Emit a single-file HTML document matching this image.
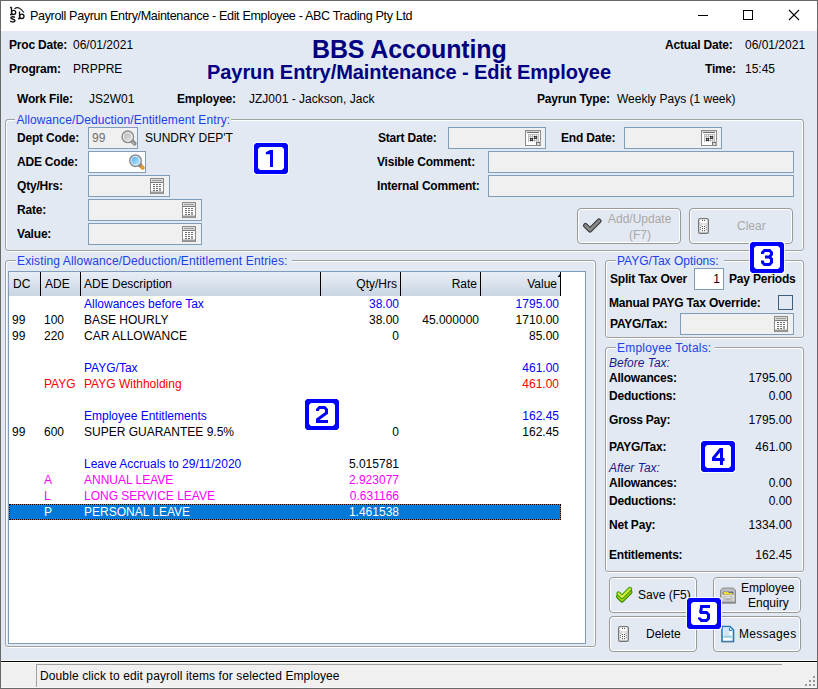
<!DOCTYPE html>
<html><head><meta charset="utf-8">
<style>
*{box-sizing:border-box;margin:0;padding:0}
html,body{width:818px;height:689px;overflow:hidden;background:#7a7a7a}
body{position:relative;font-family:"Liberation Sans",sans-serif;font-size:12px;color:#000}
.a{position:absolute}
.t{position:absolute;white-space:nowrap;font-size:12px;line-height:14px;height:14px}
.b{font-weight:bold;letter-spacing:-0.2px}
.r{text-align:right}
#win{left:0;top:0;width:818px;height:689px;background:#686868;}
#title{left:1px;top:1px;width:816px;height:30px;background:#fff}
#client{left:1px;top:31px;width:816px;height:630px;background:#E3E9F3}
.g1{position:absolute;border:1px solid #fff;border-radius:3px}
.g2{position:absolute;border:1px solid #A0A0A0;border-radius:3px}
.lbl{position:absolute;white-space:nowrap;font-size:12px;line-height:14px;color:#2040E8;background:#E3E9F3;padding:0 1px}
.inp{position:absolute;border:1px solid #7F9DB9;background:#F0F0F0}
.btn{position:absolute;border:1px solid #999;border-radius:4px;box-shadow:inset 0 0 0 1px #fff}
.badge{position:absolute;width:34px;height:31px;background:#0000FF;clip-path:polygon(2px 0,32px 0,34px 2px,34px 29px,32px 31px,2px 31px,0 29px,0 2px)}
.halo{position:absolute;width:36px;height:33px;background:#fff;opacity:0.85;clip-path:polygon(2px 0,34px 0,36px 2px,36px 31px,34px 33px,2px 33px,0 31px,0 2px)}
.badge i{position:absolute;left:4px;top:4px;width:26px;height:23px;background:#fff;clip-path:polygon(2px 0,24px 0,26px 2px,26px 21px,24px 23px,2px 23px,0 21px,0 2px)}
.badge span{position:absolute;left:0;top:4px;width:34px;text-align:center;font:bold 24px/24px "Liberation Sans",sans-serif;color:#0000FF}
.hdr{position:absolute;top:272px;height:24px;background:linear-gradient(#E9EEF5,#C9D5E4)}
.sep{position:absolute;top:272px;width:1px;height:24px;background:#000}
.grow{position:absolute;white-space:nowrap;font-size:12px;line-height:14px}
.blue{color:#0000FF}.red{color:#FF0000}.mag{color:#FF00FF}.sel{color:#fff}
</style></head><body>
<svg width="0" height="0" style="position:absolute">
<defs>
<linearGradient id="lg_gray" x1="0" y1="0" x2="1" y2="1"><stop offset="0" stop-color="#eeeeee"/><stop offset="1" stop-color="#b8b8b8"/></linearGradient>
<linearGradient id="lg_gray2" x1="0" y1="0" x2="1" y2="1"><stop offset="0" stop-color="#b4b4b4"/><stop offset="1" stop-color="#e6e6e6"/></linearGradient>
<linearGradient id="lg_blue" x1="0" y1="0" x2="1" y2="1"><stop offset="0" stop-color="#3D9FE6"/><stop offset="0.55" stop-color="#8ED0F5"/><stop offset="1" stop-color="#C9EEFB"/></linearGradient>
<symbol id="calc" viewBox="0 0 14 16">
<rect x="0.5" y="0.5" width="13" height="15" fill="#fff" stroke="#8a8a8a"/>
<rect x="1" y="1" width="12" height="3.5" fill="#dcdcdc"/>
<rect x="2" y="2" width="10" height="1" fill="#9a9a9a"/>
<rect x="1" y="4" width="12" height="1" fill="#7a7a7a"/>
<rect x="1" y="13.5" width="12" height="2" fill="#9a9a9a"/>
<g fill="#6a6a6a"><rect x="3" y="6" width="2" height="1"/><rect x="6" y="6" width="2" height="1"/><rect x="9" y="6" width="2" height="1"/>
<rect x="3" y="8" width="2" height="1"/><rect x="6" y="8" width="2" height="1"/><rect x="9" y="8" width="2" height="1"/>
<rect x="3" y="10" width="2" height="1"/><rect x="6" y="10" width="2" height="1"/><rect x="9" y="10" width="2" height="3" fill="#999"/>
<rect x="3" y="12" width="2" height="1"/><rect x="6" y="12" width="2" height="1"/></g>
</symbol>
<symbol id="phone" viewBox="0 0 11 16">
<rect x="0.6" y="0.6" width="9.8" height="14.8" rx="1.6" fill="#dadada" stroke="#767676" stroke-width="1.2"/>
<path d="M1.8 1.6 H9.2 V4.4 Q5.5 6 1.8 4.4Z" fill="#fff"/>
<path d="M1.8 7.2 Q5.5 5.6 9.2 7.2 V13.6 H1.8Z" fill="#f8f8f8"/>
<g fill="#505050"><rect x="4" y="2" width="1" height="1"/><rect x="6" y="2" width="1" height="1"/>
<rect x="4" y="8" width="1" height="1"/><rect x="6" y="8" width="1" height="1"/><rect x="4" y="10" width="1" height="1"/><rect x="6" y="10" width="1" height="1"/><rect x="4" y="12" width="1" height="1"/><rect x="6" y="12" width="1" height="1"/></g>
<g fill="#808080"><rect x="2" y="9" width="1" height="1"/><rect x="8" y="9" width="1" height="1"/><rect x="2" y="11" width="1" height="1"/><rect x="8" y="11" width="1" height="1"/><rect x="2.5" y="7.2" width="1" height="1"/><rect x="7.5" y="7.2" width="1" height="1"/></g>
</symbol>
<symbol id="date" viewBox="0 0 16 16" shape-rendering="crispEdges">
<rect x="0" y="0" width="16" height="16" fill="#8a8a8a"/>
<rect x="1" y="1" width="14" height="14" fill="#fff"/>
<rect x="1" y="1" width="14" height="1" fill="#d0d0d0"/>
<rect x="2" y="2" width="12" height="1" fill="#6e6e6e"/>
<rect x="3" y="4" width="11" height="8" fill="#bdbdbd"/>
<g fill="#fff"><rect x="4" y="5" width="1" height="1"/><rect x="4" y="7" width="1" height="1"/><rect x="4" y="9" width="1" height="1"/><rect x="4" y="11" width="1" height="1"/><rect x="6" y="5" width="1" height="1"/><rect x="6" y="7" width="1" height="1"/><rect x="6" y="9" width="1" height="1"/><rect x="6" y="11" width="1" height="1"/><rect x="8" y="5" width="1" height="1"/><rect x="8" y="7" width="1" height="1"/><rect x="8" y="9" width="1" height="1"/><rect x="8" y="11" width="1" height="1"/><rect x="10" y="5" width="1" height="1"/><rect x="10" y="7" width="1" height="1"/><rect x="10" y="9" width="1" height="1"/><rect x="10" y="11" width="1" height="1"/><rect x="12" y="5" width="1" height="1"/><rect x="12" y="7" width="1" height="1"/><rect x="12" y="9" width="1" height="1"/><rect x="12" y="11" width="1" height="1"/></g>
<rect x="5" y="8" width="3" height="3" fill="#3a3a3a"/><rect x="6" y="9" width="1" height="1" fill="#999"/>
<rect x="9" y="6" width="3" height="3" fill="#3a3a3a"/><rect x="10" y="7" width="1" height="1" fill="#999"/>
<path d="M10 16 L16 10 V16Z" fill="#a8a8a8" shape-rendering="auto"/>
<rect x="11" y="12" width="1" height="3" fill="#707070"/><rect x="11" y="12" width="4" height="1" fill="#707070"/>
<rect x="12" y="13" width="2" height="2" fill="#e0e0e0"/>
<rect x="0" y="15" width="16" height="1" fill="#8a8a8a"/>
</symbol>
</defs></svg>
<div id="win" class="a"></div>
<div id="title" class="a"></div>
<!-- title icon -->
<div class="t" style="left:30px;top:9px;font-size:12.6px;line-height:15px;letter-spacing:-0.36px;color:#000">Payroll Payrun Entry/Maintenance - Edit Employee - ABC Trading Pty Ltd</div>
<!-- window controls -->
<div class="a" style="left:698px;top:15px;width:10px;height:1px;background:#000"></div>
<div class="a" style="left:743px;top:10px;width:10px;height:10px;border:1px solid #000"></div>
<svg class="a" style="left:788px;top:9px" width="12" height="12"><path d="M1 1L11 11M11 1L1 11" stroke="#000" stroke-width="1.1"/></svg>

<div id="client" class="a"></div>

<!-- header -->
<div class="t b" style="left:9px;top:38px">Proc Date:</div>
<div class="t" style="left:73px;top:38px">06/01/2021</div>
<div class="t b" style="left:9px;top:62px">Program:</div>
<div class="t" style="left:73px;top:62px">PRPPRE</div>
<div class="t b" style="left:17px;top:92px">Work File:</div>
<div class="t" style="left:89px;top:92px">JS2W01</div>
<div class="t b" style="left:177px;top:92px">Employee:</div>
<div class="t" style="left:249px;top:92px">JZJ001 - Jackson, Jack</div>
<div class="t b" style="left:537px;top:92px">Payrun Type:</div>
<div class="t" style="left:617px;top:92px">Weekly Pays (1 week)</div>
<div class="t b" style="left:665px;top:38px">Actual Date:</div>
<div class="t" style="left:745px;top:38px">06/01/2021</div>
<div class="t b" style="left:705px;top:62px">Time:</div>
<div class="t" style="left:745px;top:62px">15:45</div>
<div class="t b" style="left:312px;top:37px;font-size:25px;line-height:24px;height:24px;letter-spacing:-0.12px;color:#000080">BBS Accounting</div>
<div class="t b" style="left:207px;top:62px;font-size:20px;line-height:20px;height:20px;letter-spacing:-0.07px;color:#000080">Payrun Entry/Maintenance - Edit Employee</div>

<!-- group 1 -->
<div class="g1" style="left:6px;top:120px;width:797px;height:132px"></div>
<div class="g2" style="left:5px;top:119px;width:799px;height:132px"></div>
<div class="lbl" style="left:15.4px;top:113px;letter-spacing:0.1px">Allowance/Deduction/Entitlement Entry:</div>

<div class="t b" style="left:17px;top:131px">Dept Code:</div>
<div class="inp" style="left:88px;top:127px;width:50px;height:22px"></div>
<div class="t" style="left:92px;top:131px;color:#6D6D6D">99</div>
<div class="t" style="left:145px;top:131px">SUNDRY DEP'T</div>
<div class="t b" style="left:17px;top:155px">ADE Code:</div>
<div class="inp" style="left:88px;top:151px;width:58px;height:22px;background:#fff"></div>
<div class="t b" style="left:17px;top:179px">Qty/Hrs:</div>
<div class="inp" style="left:88px;top:175px;width:82px;height:22px"></div>
<div class="t b" style="left:17px;top:203px">Rate:</div>
<div class="inp" style="left:88px;top:199px;width:114px;height:22px"></div>
<div class="t b" style="left:17px;top:227px">Value:</div>
<div class="inp" style="left:88px;top:223px;width:114px;height:22px"></div>

<div class="t b" style="left:378px;top:131px">Start Date:</div>
<div class="inp" style="left:448px;top:127px;width:98px;height:22px"></div>
<div class="t b" style="left:561px;top:131px">End Date:</div>
<div class="inp" style="left:624px;top:127px;width:98px;height:22px"></div>
<div class="t b" style="left:377px;top:155px">Visible Comment:</div>
<div class="inp" style="left:488px;top:151px;width:306px;height:22px"></div>
<div class="t b" style="left:377px;top:179px">Internal Comment:</div>
<div class="inp" style="left:488px;top:175px;width:306px;height:22px"></div>

<div class="btn" style="left:577px;top:208px;width:104px;height:36px"></div>
<div class="t" style="left:608px;top:212px;color:#A8A8A8">Add/Update</div>
<div class="t" style="left:629px;top:228px;color:#A8A8A8">(F7)</div>
<div class="btn" style="left:689px;top:208px;width:104px;height:36px"></div>
<div class="t" style="left:737px;top:219px;color:#A8A8A8">Clear</div>

<!-- group 2 -->
<div class="g1" style="left:6px;top:261px;width:589px;height:387px"></div>
<div class="g2" style="left:5px;top:260px;width:591px;height:387px"></div>
<div class="lbl" style="left:16px;top:254px;letter-spacing:0.13px;padding-right:4px">Existing Allowance/Deduction/Entitlement Entries:</div>
<div class="a" style="left:8px;top:271px;width:578px;height:373px;border:1px solid #7F9DB9;background:#fff"></div>
<div class="hdr" style="left:9px;width:552px"></div>
<div class="sep" style="left:40px"></div>
<div class="sep" style="left:80px"></div>
<div class="sep" style="left:320px"></div>
<div class="sep" style="left:400px"></div>
<div class="sep" style="left:480px"></div>
<div class="sep" style="left:560px"></div>
<div class="t" style="left:13px;top:277px">DC</div>
<div class="t" style="left:45px;top:277px">ADE</div>
<div class="t" style="left:84px;top:277px">ADE Description</div>
<div class="t r" style="left:317px;top:277px;width:80px">Qty/Hrs</div>
<div class="t r" style="left:397px;top:277px;width:80px">Rate</div>
<div class="t r" style="left:477px;top:277px;width:80px">Value</div>

<div class="a" style="left:9px;top:504px;width:552px;height:16px;background:#0078D7;border:1px solid #C07030"></div><div class="a" style="left:9px;top:504px;width:552px;height:16px;border:1px dotted #000"></div>
<div class="t blue" style="left:84px;top:297px">Allowances before Tax</div>
<div class="t r blue" style="left:299px;top:297px;width:100px">38.00</div>
<div class="t r blue" style="left:459px;top:297px;width:100px">1795.00</div>
<div class="t" style="left:12px;top:313px">99</div>
<div class="t" style="left:44px;top:313px">100</div>
<div class="t" style="left:84px;top:313px">BASE HOURLY</div>
<div class="t r" style="left:299px;top:313px;width:100px">38.00</div>
<div class="t r" style="left:379px;top:313px;width:100px">45.000000</div>
<div class="t r" style="left:459px;top:313px;width:100px">1710.00</div>
<div class="t" style="left:12px;top:329px">99</div>
<div class="t" style="left:44px;top:329px">220</div>
<div class="t" style="left:84px;top:329px">CAR ALLOWANCE</div>
<div class="t r" style="left:299px;top:329px;width:100px">0</div>
<div class="t r" style="left:459px;top:329px;width:100px">85.00</div>
<div class="t blue" style="left:84px;top:361px">PAYG/Tax</div>
<div class="t r blue" style="left:459px;top:361px;width:100px">461.00</div>
<div class="t red" style="left:44px;top:377px">PAYG</div>
<div class="t red" style="left:84px;top:377px">PAYG Withholding</div>
<div class="t r red" style="left:459px;top:377px;width:100px">461.00</div>
<div class="t blue" style="left:84px;top:409px">Employee Entitlements</div>
<div class="t r blue" style="left:459px;top:409px;width:100px">162.45</div>
<div class="t" style="left:12px;top:425px">99</div>
<div class="t" style="left:44px;top:425px">600</div>
<div class="t" style="left:84px;top:425px">SUPER GUARANTEE 9.5%</div>
<div class="t r" style="left:299px;top:425px;width:100px">0</div>
<div class="t r" style="left:459px;top:425px;width:100px">162.45</div>
<div class="t blue" style="left:84px;top:457px">Leave Accruals to 29/11/2020</div>
<div class="t r" style="left:299px;top:457px;width:100px">5.015781</div>
<div class="t mag" style="left:44px;top:473px">A</div>
<div class="t mag" style="left:84px;top:473px">ANNUAL LEAVE</div>
<div class="t r mag" style="left:299px;top:473px;width:100px">2.923077</div>
<div class="t mag" style="left:44px;top:489px">L</div>
<div class="t mag" style="left:84px;top:489px">LONG SERVICE LEAVE</div>
<div class="t r mag" style="left:299px;top:489px;width:100px">0.631166</div>
<div class="t sel" style="left:44px;top:505px">P</div>
<div class="t sel" style="left:84px;top:505px">PERSONAL LEAVE</div>
<div class="t r sel" style="left:299px;top:505px;width:100px">1.461538</div>


<!-- group 3 -->
<div class="g1" style="left:606px;top:261px;width:197px;height:78px"></div>
<div class="g2" style="left:605px;top:260px;width:199px;height:78px"></div>
<div class="lbl" style="left:616px;top:254px;padding-right:5px">PAYG/Tax Options:</div>
<div class="t b" style="left:610px;top:272px">Split Tax Over</div>
<div class="inp" style="left:694px;top:268px;width:30px;height:22px;background:#fff"></div>
<div class="t" style="left:694px;top:272px;width:26px;text-align:right">1</div>
<div class="t b" style="left:729px;top:272px">Pay Periods</div>
<div class="t b" style="left:609px;top:296px">Manual PAYG Tax Override:</div>
<div class="a" style="left:778px;top:295px;width:15px;height:15px;border:1px solid #3F5F7F;background:#E3E9F3"></div>
<div class="t b" style="left:610px;top:317px">PAYG/Tax:</div>
<div class="inp" style="left:680px;top:313px;width:114px;height:22px"></div>

<!-- group 4 -->
<div class="g1" style="left:606px;top:348px;width:197px;height:225px"></div>
<div class="g2" style="left:605px;top:347px;width:199px;height:225px"></div>
<div class="lbl" style="left:616px;top:341px;letter-spacing:0.2px;padding-right:4px">Employee Totals:</div>
<div class="t" style="left:609px;top:356px;font-style:italic;color:#1A1A8C">Before Tax:</div>
<div class="t b" style="left:609px;top:371px">Allowances:</div>
<div class="t r" style="left:692px;top:371px;width:100px">1795.00</div>
<div class="t b" style="left:609px;top:389px">Deductions:</div>
<div class="t r" style="left:692px;top:389px;width:100px">0.00</div>
<div class="t b" style="left:609px;top:413px">Gross Pay:</div>
<div class="t r" style="left:692px;top:413px;width:100px">1795.00</div>
<div class="t b" style="left:609px;top:440px">PAYG/Tax:</div>
<div class="t r" style="left:692px;top:440px;width:100px">461.00</div>
<div class="t" style="left:609px;top:461px;font-style:italic;color:#1A1A8C">After Tax:</div>
<div class="t b" style="left:609px;top:476px">Allowances:</div>
<div class="t r" style="left:692px;top:476px;width:100px">0.00</div>
<div class="t b" style="left:609px;top:494px">Deductions:</div>
<div class="t r" style="left:692px;top:494px;width:100px">0.00</div>
<div class="t b" style="left:609px;top:518px">Net Pay:</div>
<div class="t r" style="left:692px;top:518px;width:100px">1334.00</div>
<div class="t b" style="left:609px;top:548px">Entitlements:</div>
<div class="t r" style="left:692px;top:548px;width:100px">162.45</div>

<!-- buttons -->
<div class="btn" style="left:609px;top:577px;width:88px;height:36px"></div>
<div class="t" style="left:638px;top:588px">Save (F5)</div>
<div class="btn" style="left:713px;top:577px;width:88px;height:36px"></div>
<div class="t" style="left:741px;top:581px">Employee</div>
<div class="t" style="left:748px;top:596px">Enquiry</div>
<div class="btn" style="left:609px;top:616px;width:88px;height:36px"></div>
<div class="t" style="left:646px;top:627px">Delete</div>
<div class="btn" style="left:713px;top:616px;width:88px;height:36px"></div>
<div class="t" style="left:739px;top:627px;letter-spacing:0.35px">Messages</div>

<!-- status bar -->
<div class="a" style="left:1px;top:660px;width:816px;height:1px;background:#F6F8FC"></div>
<div class="a" style="left:1px;top:661px;width:816px;height:1px;background:#000"></div>
<div class="a" style="left:1px;top:662px;width:816px;height:26px;background:#F0F0F0;border-top:1px solid #fff;border-bottom:1px solid #F8F8F8"></div>
<div class="a" style="left:36px;top:664px;width:746px;height:23px;border-left:1px solid #A0A0A0;border-top:1px solid #A0A0A0"></div>
<div class="t" style="left:40px;top:669px;letter-spacing:0.11px">Double click to edit payroll items for selected Employee</div>


<!-- icons -->
<svg class="a" style="left:120px;top:129px" width="18" height="18" viewBox="0 0 18 18">
<path d="M12 12 L14.6 14.6" stroke="#8a8a8a" stroke-width="4" stroke-linecap="round"/>
<path d="M12.6 13.2 L14.2 14.8" stroke="#c0c0c0" stroke-width="1.2" stroke-linecap="round"/>
<circle cx="7.8" cy="7.8" r="5.7" fill="url(#lg_gray2)" stroke="#8f8f8f" stroke-width="1.6"/>
<circle cx="7.8" cy="7.8" r="4.4" fill="none" stroke="#f4f4f4" stroke-width="1"/>
</svg>
<svg class="a" style="left:128px;top:153px" width="18" height="18" viewBox="0 0 18 18">
<path d="M12 12 L14.8 14.8" stroke="#E49A2A" stroke-width="4" stroke-linecap="round"/>
<path d="M11.5 11.5 L13 13" stroke="#8a8a8a" stroke-width="4"/>
<circle cx="7.5" cy="7.7" r="5.7" fill="url(#lg_blue)" stroke="#8f8f8f" stroke-width="1.6"/>
<circle cx="7.5" cy="7.7" r="4.4" fill="none" stroke="#f0f8ff" stroke-width="0.9"/>
</svg>
<svg class="a" style="left:150px;top:178px" width="14" height="16"><use href="#calc"/></svg>
<svg class="a" style="left:182px;top:202px" width="14" height="16"><use href="#calc"/></svg>
<svg class="a" style="left:182px;top:226px" width="14" height="16"><use href="#calc"/></svg>
<svg class="a" style="left:774px;top:316px" width="14" height="16"><use href="#calc"/></svg>
<svg class="a" style="left:525px;top:130px" width="16" height="16"><use href="#date"/></svg>
<svg class="a" style="left:701px;top:130px" width="16" height="16"><use href="#date"/></svg>
<svg class="a" style="left:582px;top:218px" width="20" height="16" viewBox="0 0 20 16">
<path d="M3.5 7.5 L8 12 L17 3" fill="none" stroke="#3c3c3c" stroke-width="5" stroke-linejoin="round" stroke-linecap="round"/>
<path d="M3.5 7.5 L8 12 L17 3" fill="none" stroke="#8a8a8a" stroke-width="2.6" stroke-linejoin="round" stroke-linecap="round"/>
</svg>
<svg class="a" style="left:698px;top:218px" width="11" height="16"><use href="#phone"/></svg>
<svg class="a" style="left:612px;top:583px" width="24" height="24" viewBox="0 0 24 24">
<path d="M6.5 13.5 L10 17 L18 9" fill="none" stroke="#2E8A00" stroke-width="5" stroke-linejoin="round" stroke-linecap="round"/>
<path d="M6.5 13.5 L10 17 L18 9" fill="none" stroke="#A6D000" stroke-width="2.8" stroke-linejoin="round" stroke-linecap="round"/>
<path d="M6.5 10.5 L10 14 L18 6" fill="none" stroke="#3C9A00" stroke-width="4.4" stroke-linejoin="round" stroke-linecap="round"/>
<path d="M6.5 10.5 L10 14 L18 6" fill="none" stroke="#D6EE3A" stroke-width="2.2" stroke-linejoin="round" stroke-linecap="round"/>
</svg>
<svg class="a" style="left:720px;top:587px" width="17" height="17" viewBox="0 0 17 17">
<path d="M3 1 H13 L15.5 3 V16 H0.5 V3Z" fill="#bdbdbd" stroke="#8a8a8a"/>
<rect x="2" y="4" width="12" height="11" fill="#d4d4d4"/>
<rect x="2.5" y="4.5" width="11" height="3" fill="#5a6a8a"/>
<path d="M3.5 5 H8 L9 6 H12.5 V7.5 H3.5Z" fill="#F5D830"/>
<rect x="2.5" y="8.5" width="11" height="6" fill="#c6c6c6" stroke="#e6e6e6" stroke-width="0.6"/>
<rect x="6" y="10" width="4" height="1.2" fill="#e8e8e8"/><rect x="6" y="11.5" width="4" height="1" fill="#999"/>
<rect x="1" y="14.5" width="15" height="2" fill="#8c8c8c"/>
</svg>
<svg class="a" style="left:618px;top:626px" width="11" height="16"><use href="#phone"/></svg>
<svg class="a" style="left:720px;top:625px" width="16" height="18" viewBox="0 0 16 18">
<path d="M2 1.5 H10 L13.5 5 V16.5 H2Z" fill="#fff" stroke="#1E78B8" stroke-width="1.6"/>
<rect x="3.5" y="3" width="6" height="10" fill="#CFE6F2"/>
<rect x="3.5" y="10.5" width="8.5" height="2.5" fill="#A9D2E6"/>
<path d="M9.5 3 V5.5 H12" fill="none" stroke="#1E78B8" stroke-width="1"/>
<rect x="2.2" y="16.5" width="11.5" height="1" fill="#9a8a80" opacity="0.6"/>
</svg>
<svg class="a" style="left:8px;top:5px" width="20" height="20" viewBox="0 0 20 20">
<g fill="none" stroke="#111" stroke-width="1.3">
<path d="M3.5 2.2 V9.6"/><path d="M2 2.5 H3.5"/><path d="M2 9.6 H5"/>
<circle cx="5.6" cy="7.4" r="2.1"/>
<path d="M11.5 6.5 V13.6"/><path d="M10 13.6 H12.5"/>
<circle cx="13.8" cy="11.3" r="2.2"/>
<path d="M6.5 3.8 Q11 0.2 15.8 7.5" stroke-width="1.1"/>
<path d="M7 12.4 Q5 11.3 3.2 12.2 Q2.3 13.4 4.5 14 Q7 14.5 7 15.8 Q6.5 17.2 4 16.9 Q2.6 16.6 2.3 15.8" stroke-width="1.4"/>
</g>
</svg>
<!-- size grip -->
<svg class="a" style="left:805px;top:676px" width="11" height="11" viewBox="0 0 11 11"><g fill="#999">
<rect x="8" y="0" width="2" height="2"/><rect x="4" y="4" width="2" height="2"/><rect x="8" y="4" width="2" height="2"/>
<rect x="0" y="8" width="2" height="2"/><rect x="4" y="8" width="2" height="2"/><rect x="8" y="8" width="2" height="2"/></g></svg>
<!-- sort tick -->
<svg class="a" style="left:557px;top:274px" width="4" height="4"><path d="M3 0 L3 3 L0.6 3Z" fill="#000"/></svg>

<!-- badges -->
<div class="halo" style="left:253px;top:142px"></div><div class="badge" style="left:254px;top:143px"><i></i><svg width="34" height="31" style="position:absolute;left:0;top:0"><g fill="none" stroke="#0000FF" stroke-width="3" stroke-linejoin="miter" stroke-miterlimit="3"><path d="M17.5 7 V24"/><path d="M16 7 L11.8 9.3 V11.3 H16Z" fill="#00f" stroke="none"/></g></svg></div>
<div class="halo" style="left:304px;top:398px"></div><div class="badge" style="left:305px;top:399px"><i></i><svg width="34" height="31" style="position:absolute;left:0;top:0"><g fill="none" stroke="#0000FF" stroke-width="3" stroke-linejoin="miter" stroke-miterlimit="3"><path d="M12.5 12 V10.5 L14.5 8.5 H19.5 L21.5 10.5 V14 L12.5 20.5 V22.5 H23"/></g></svg></div>
<div class="halo" style="left:749px;top:241px"></div><div class="badge" style="left:750px;top:242px"><i></i><svg width="34" height="31" style="position:absolute;left:0;top:0"><g fill="none" stroke="#0000FF" stroke-width="3" stroke-linejoin="miter" stroke-miterlimit="3"><path d="M12.5 12 V10.5 L14.5 8.5 H19.5 L21.5 10.5 V12.5 L19.5 15 H15 M19.5 15 L21.5 17 V20.5 L19.5 22.5 H14.5 L12.5 20.5 V18.5"/></g></svg></div>
<div class="halo" style="left:700px;top:440px"></div><div class="badge" style="left:701px;top:441px"><i></i><svg width="34" height="31" style="position:absolute;left:0;top:0"><g fill="none" stroke="#0000FF" stroke-width="3" stroke-linejoin="miter" stroke-miterlimit="3"><path d="M20.5 7 V24"/><path d="M20 7.8 L12.5 17 V18.5 H23.5"/></g></svg></div>
<div class="halo" style="left:686px;top:597px"></div><div class="badge" style="left:687px;top:598px"><i></i><svg width="34" height="31" style="position:absolute;left:0;top:0"><g fill="none" stroke="#0000FF" stroke-width="3" stroke-linejoin="miter" stroke-miterlimit="3"><path d="M23 8.5 H14.5 L13.5 15"/><path d="M13 14.5 H19.5 L21.5 16.5 V20.5 L19.5 22.5 H14.5 L12.5 20.5 V19.5"/></g></svg></div>
</body></html>
